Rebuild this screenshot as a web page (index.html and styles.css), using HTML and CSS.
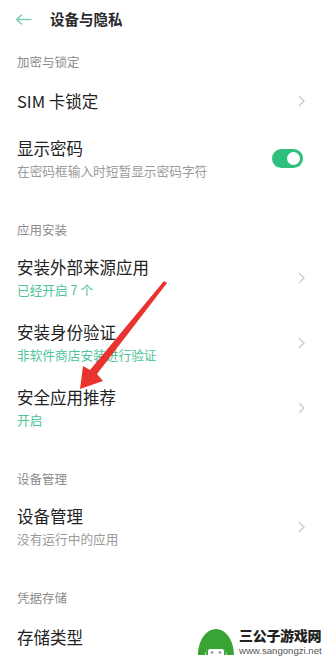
FILE: index.html
```html
<!DOCTYPE html>
<html lang="zh-CN">
<head>
<meta charset="utf-8">
<title>设备与隐私</title>
<link rel="stylesheet" href="styles.css">
</head>
<body>
<div class="page">
  <header class="topbar">
    <svg class="back" width="17" height="11" viewBox="0 0 17 11"><path d="M16 5.5H2M6.5 1L1.5 5.5L6.5 10" fill="none" stroke="#7fd0b2" stroke-width="1.6" stroke-linecap="round" stroke-linejoin="round"/></svg>
    <h1 class="title">设备与隐私</h1>
  </header>

  <div class="label first">加密与锁定</div>
  <div class="item single">
    <div class="texts"><div class="t">SIM 卡锁定</div></div>
    <svg class="chev" width="7" height="12" viewBox="0 0 7 12"><path d="M1 1L6 6L1 11" fill="none" stroke="#cfcfcf" stroke-width="1.5"/></svg>
  </div>
  <div class="item">
    <div class="texts"><div class="t">显示密码</div><div class="s">在密码框输入时短暂显示密码字符</div></div>
    <div class="toggle"><span class="knob"></span></div>
  </div>

  <div class="label">应用安装</div>
  <div class="item">
    <div class="texts"><div class="t">安装外部来源应用</div><div class="s green">已经开启 7 个</div></div>
    <svg class="chev" width="7" height="12" viewBox="0 0 7 12"><path d="M1 1L6 6L1 11" fill="none" stroke="#cfcfcf" stroke-width="1.5"/></svg>
  </div>
  <div class="item">
    <div class="texts"><div class="t">安装身份验证</div><div class="s green">非软件商店安装进行验证</div></div>
    <svg class="chev" width="7" height="12" viewBox="0 0 7 12"><path d="M1 1L6 6L1 11" fill="none" stroke="#cfcfcf" stroke-width="1.5"/></svg>
  </div>
  <div class="item">
    <div class="texts"><div class="t">安全应用推荐</div><div class="s green">开启</div></div>
    <svg class="chev" width="7" height="12" viewBox="0 0 7 12"><path d="M1 1L6 6L1 11" fill="none" stroke="#cfcfcf" stroke-width="1.5"/></svg>
  </div>

  <div class="label">设备管理</div>
  <div class="item">
    <div class="texts"><div class="t">设备管理</div><div class="s">没有运行中的应用</div></div>
    <svg class="chev" width="7" height="12" viewBox="0 0 7 12"><path d="M1 1L6 6L1 11" fill="none" stroke="#cfcfcf" stroke-width="1.5"/></svg>
  </div>

  <div class="label">凭据存储</div>
  <div class="item single">
    <div class="texts"><div class="t">存储类型</div></div>
  </div>

  <svg class="arrow" width="328" height="663" viewBox="0 0 328 663">
    <polygon points="164,281 167,283 97,374 103,381 80,389 83,366 90,370" fill="#e8332f"/>
  </svg>

  <div class="watermark">
    <svg class="wm-logo" width="40" height="32" viewBox="0 0 40 32">
      <path d="M2 30C2 16 10 4 20 4C30 4 38 16 38 30L31 30C30 26 28 21 20 21C12 21 10 26 9 30Z" fill="#3aa335"/>
      <path d="M10 30C10 24 13 20 20 20C27 20 30 24 30 30Z" fill="#3aa335"/>
      <rect x="12" y="24" width="16" height="8" rx="2" fill="#fff"/>
      <circle cx="16" cy="27.5" r="1.2" fill="#888"/>
      <circle cx="24" cy="27.5" r="1.2" fill="#888"/>
    </svg>
    <div class="wm-text">
      <div class="wm-name">三公子游戏网</div>
      <div class="wm-url">www.sangongzi.net</div>
    </div>
  </div>
</div>
</body>
</html>
```

FILE: styles.css
```css
html, body {
  margin: 0;
  padding: 0;
  background: #fff;
}
body {
  font-family: "Noto Sans CJK SC", "Noto Sans", sans-serif;
  color: #222;
}
.page {
  position: relative;
  width: 328px;
  height: 663px;
  overflow: hidden;
}
.topbar {
  height: 38px;
  display: flex;
  align-items: center;
  padding-left: 15px;
}
.back {
  margin-right: 18px;
}
.title {
  margin: 0;
  font-size: 14.5px;
  font-weight: 700;
  line-height: 20px;
  color: #2a2a2a;
}
.label {
  margin-top: 30px;
  padding: 0 17px 6px;
  font-size: 12.5px;
  line-height: 18px;
  color: #8c8c8c;
}
.label.first {
  margin-top: 15px;
}
.item {
  display: flex;
  align-items: center;
  padding: 11px 23px 11px 17px;
}
.item.single {
  padding-top: 13px;
  padding-bottom: 14px;
}
.texts {
  flex: 1;
  display: flex;
  flex-direction: column;
  gap: 3px;
}
.t {
  font-size: 16.5px;
  line-height: 22px;
  color: #222;
}
.s {
  font-size: 12.7px;
  line-height: 18px;
  color: #9a9a9a;
}
.s.green {
  color: #4fc49a;
}
.chev {
  flex: none;
}
.toggle {
  flex: none;
  width: 31px;
  height: 19px;
  border-radius: 10px;
  background: #2fbf7c;
  margin-right: 2px;
  display: flex;
  align-items: center;
  justify-content: flex-end;
  padding-right: 3px;
  box-sizing: border-box;
}
.knob {
  width: 13px;
  height: 13px;
  border-radius: 50%;
  background: #fff;
}
.arrow {
  position: absolute;
  left: 0;
  top: 0;
  pointer-events: none;
}
.watermark {
  position: absolute;
  left: 196px;
  top: 625px;
  display: flex;
  align-items: flex-start;
  gap: 3px;
}
.wm-text {
  display: flex;
  flex-direction: column;
  padding-top: 3px;
}
.wm-name {
  font-size: 14px;
  font-weight: 900;
  line-height: 15px;
  color: #222;
  letter-spacing: -0.3px;
}
.wm-url {
  font-family: "Liberation Sans", sans-serif;
  font-size: 9.6px;
  line-height: 11px;
  color: #555;
  margin-top: 2px;
}
```
